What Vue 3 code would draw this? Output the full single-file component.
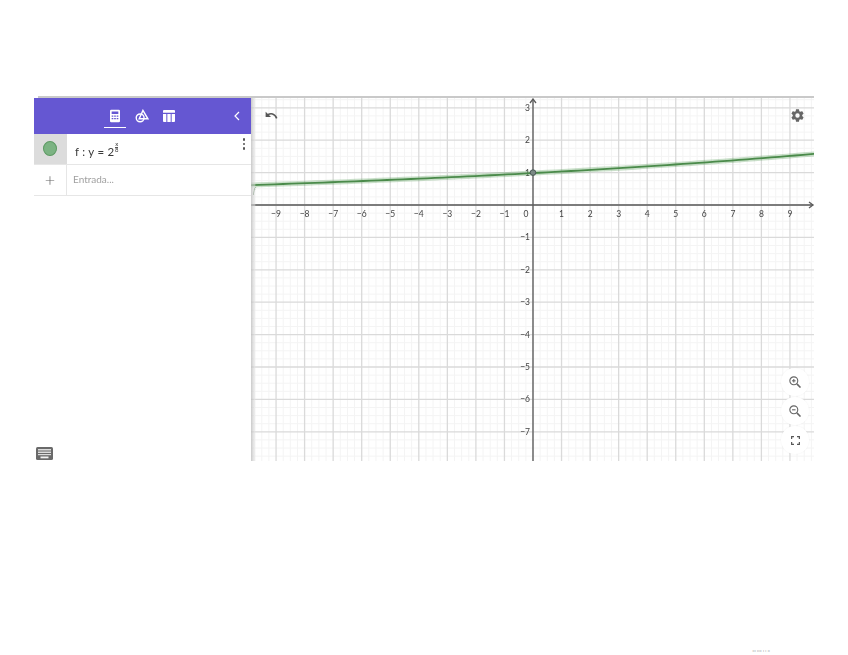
<script setup>
const W = 563, H = 364
const ox = 282, oy = 108, ux = 28.55, uy = 32.4
const X = v => ox + v * ux
const Y = v => oy - v * uy
const minorX = [], minorY = [], majorX = [], majorY = []
for (let i = -40; i <= 40; i++) {
  if (i % 4) minorX.push(X(i / 4))
}
for (let i = -32; i <= 16; i++) {
  if (i % 4) minorY.push(Y(i / 4))
}
const xNums = []
for (let i = -9; i <= 9; i++) { if (i) { xNums.push(i); } }
for (let i = -10; i <= 10; i++) majorX.push(X(i))
for (let i = -8; i <= 4; i++) majorY.push(Y(i))
const yNums = [3, 2, 1, -1, -2, -3, -4, -5, -6, -7]
const label = n => (n < 0 ? '\u2212' + Math.abs(n) : String(n))
let d = ''
for (let px = 0; px <= W + 8; px += 8) {
  const v = (px - ox) / ux
  d += (px ? 'L' : 'M') + px + ' ' + Y(0.985 * Math.pow(2, v / 14.5)).toFixed(2)
}
const zooms = [
  { id: 'in', plus: true },
  { id: 'out', plus: false }
]
</script>

<template>
  <div class="page">
    <div class="app">
      <aside class="panel">
        <header class="tabs">
          <div class="tab-group">
            <button class="tab active" aria-label="Álgebra">
              <svg width="10" height="14" viewBox="0 0 12 15">
                <path fill="#fff" fill-rule="evenodd" d="M1.5 0h9A1.5 1.5 0 0 1 12 1.5v12a1.5 1.5 0 0 1-1.5 1.5h-9A1.5 1.5 0 0 1 0 13.500v-12A1.500 1.500 0 0 1 1.500 0zM2 2v3h8V2zM2 7v1.500h2V7zm3 0v1.500h2V7zm3 0v1.500h2V7zM2 10v1.500h2V10zm3 0v1.500h2V10zm3 0v1.500h2V10z"/>
              </svg>
            </button>
            <button class="tab" aria-label="Herramientas">
              <svg width="14" height="14" viewBox="0 0 15 15" fill="none" stroke="#fff" stroke-width="1.500">
                <circle cx="5.500" cy="9.500" r="4.200"/>
                <path d="M8.500 1.500 13.800 10.500H4.500z"/>
              </svg>
            </button>
            <button class="tab" aria-label="Tabla">
              <svg width="12" height="12" viewBox="0 0 13 13">
                <path fill="#fff" d="M0 1a1 1 0 0 1 1-1h11a1 1 0 0 1 1 1v2H0zM0 4.200h3.600V13H1a1 1 0 0 1-1-1zM4.700 4.200h3.600V13H4.700zM9.400 4.200H13V12a1 1 0 0 1-1 1H9.400z"/>
              </svg>
            </button>
          </div>
          <button class="collapse" aria-label="Cerrar">
            <svg width="6" height="10" viewBox="0 0 6 10" fill="none" stroke="#fff" stroke-width="1.200"><path d="M5 1 1 5l4 4"/></svg>
          </button>
        </header>

        <div class="row row-fn">
          <div class="marble-cell"><span class="marble"></span></div>
          <div class="formula">
            <span>f : y = 2</span><span class="frac"><i>x</i><i>8</i></span>
          </div>
          <button class="more" aria-label="Más"><b></b><b></b><b></b></button>
        </div>
        <div class="row row-input">
          <div class="plus-cell">+</div>
          <div class="placeholder">Entrada...</div>
        </div>

        <div class="kbd">
          <svg width="17" height="13" viewBox="0 0 17 13">
            <rect width="17" height="13" rx="1.500" fill="#6a6a6a"/>
            <g fill="#dcdcdc">
              <rect x="2" y="2" width="13" height="1.500"/>
              <rect x="2" y="4.500" width="13" height="1.500"/>
              <rect x="2" y="7" width="13" height="1.200"/>
              <rect x="4.500" y="9.500" width="8" height="1.800" fill="#f2f2f2"/>
            </g>
          </svg>
        </div>
      </aside>

      <section class="graph">
        <svg class="plot" :width="W" :height="H" :viewBox="`0 0 ${W} ${H}`">
          <g stroke="#f4f4f4" stroke-width="1">
            <line v-for="x in minorX" :key="'mx' + x" :x1="x" :x2="x" y1="0" :y2="H" />
            <line v-for="y in minorY" :key="'my' + y" x1="0" :x2="W" :y1="y" :y2="y" />
          </g>
          <g stroke="#dadada" stroke-width="1.300">
            <line v-for="x in majorX" :key="'Mx' + x" :x1="x" :x2="x" y1="0" :y2="H" />
            <line v-for="y in majorY" :key="'My' + y" x1="0" :x2="W" :y1="y" :y2="y" />
          </g>
          <g stroke="#5a5a5a" stroke-width="1.300" fill="none">
            <line x1="0" :x2="W - 1" :y1="oy" :y2="oy" />
            <line :x1="ox" :x2="ox" y1="2" :y2="H" />
            <path :d="`M${ox - 3} 6 ${ox} 2 ${ox + 3} 6`" />
            <path :d="`M${W - 5} ${oy - 3} ${W - 1} ${oy} ${W - 5} ${oy + 3}`" />
          </g>
          <g class="num" text-anchor="middle">
            <text v-for="n in xNums" :key="'xn' + n" :x="X(n)" :y="oy + 12">{{ label(n) }}</text>
            <text :x="ox - 7" :y="oy + 12">0</text>
          </g>
          <g class="num" text-anchor="end">
            <text v-for="n in yNums" :key="'yn' + n" :x="ox - 3" :y="Y(n) + 3">{{ label(n) }}</text>
          </g>
          <path :d="d" fill="none" stroke="#3f8f3f" stroke-opacity=".28" stroke-width="5" />
          <path :d="d" fill="none" stroke="#4a8a4a" stroke-width="1.800" />
          <text class="fn-label" x="2" y="96">f</text>
          <circle :cx="ox" :cy="Y(1)" r="2.800" fill="#7b8a86" stroke="#4d5a58" stroke-width="1" />
        </svg>

        <button class="undo" aria-label="Deshacer">
          <svg width="13" height="9" viewBox="0 0 14 10" fill="none">
            <path d="M3 4.200C6 2.200 10.500 2.500 12.800 8.200" stroke="#555" stroke-width="1.800"/>
            <path d="M0.500 0.800v6h6z" fill="#555"/>
          </svg>
        </button>
        <button class="gear" aria-label="Ajustes">
          <svg width="15" height="15" viewBox="0 0 24 24">
            <path fill="#666" d="M19.430 12.980c.04-.32.070-.64.070-.98s-.030-.660-.070-.980l2.110-1.650c.190-.150.240-.420.120-.640l-2-3.460c-.120-.220-.390-.300-.610-.220l-2.490 1c-.520-.400-1.080-.730-1.690-.980l-.380-2.650A.488.488 0 0 0 14 2h-4c-.250 0-.460.180-.490.420l-.380 2.650c-.610.250-1.170.590-1.690.980l-2.490-1c-.230-.090-.490 0-.610.220l-2 3.460c-.130.220-.070.490.120.640l2.110 1.650c-.040.320-.070.650-.070.980s.030.660.070.980l-2.110 1.650c-.190.150-.240.420-.120.640l2 3.460c.120.220.390.300.610.220l2.490-1c.520.400 1.080.730 1.690.980l.380 2.650c.030.240.240.420.490.420h4c.250 0 .460-.180.490-.420l.380-2.650c.610-.250 1.170-.590 1.690-.980l2.490 1c.230.090.490 0 .610-.220l2-3.460c.120-.220.070-.490-.120-.640zM12 15.500a3.500 3.500 0 1 1 0-7 3.500 3.500 0 0 1 0 7z"/>
          </svg>
        </button>

        <div class="zoom-stack">
          <button v-for="z in zooms" :key="z.id" class="zoom-btn" :aria-label="z.id">
            <svg width="12" height="12" viewBox="0 0 13 13" fill="none" stroke="#666" stroke-width="1.200">
              <circle cx="5.200" cy="5.200" r="4.300"/>
              <path d="M8.500 8.500 12.500 12.500" stroke-width="1.700"/>
              <path d="M3.300 5.200h3.800"/>
              <path v-if="z.plus" d="M5.200 3.300v3.800"/>
            </svg>
          </button>
          <button class="zoom-btn" aria-label="Pantalla completa">
            <svg width="9" height="9" viewBox="0 0 10 10" fill="none" stroke="#555" stroke-width="1.300">
              <path d="M.7 3.300V.7h2.600M6.700.7h2.600v2.600M9.300 6.700v2.600H6.700M3.300 9.300H.7V6.700"/>
            </svg>
          </button>
        </div>
      </section>
    </div>
    <div class="speck">ııı ıııı ı ı ıı</div>
  </div>
</template>

<style>
html, body { margin: 0; background: #fff; }
</style>

<style scoped>
.page {
  width: 848px;
  height: 655px;
  box-sizing: border-box;
  padding: 96px 34px 0;
  overflow: hidden;
  background: #fff;
  display: flex;
  flex-direction: column;
  font-family: Lato, "Liberation Sans", sans-serif;
}
.app {
  display: flex;
  width: 780px;
  height: 365px;
  filter: blur(0.55px);
  position: relative;
}
.app::before {
  content: "";
  position: absolute;
  left: 4px;
  right: 0;
  top: 0;
  height: 2px;
  background: #c9c9c9;
  z-index: 2;
}
button {
  border: 0;
  padding: 0;
  background: none;
  display: flex;
  align-items: center;
  justify-content: center;
}
.panel {
  width: 217px;
  flex: none;
  position: relative;
  display: flex;
  flex-direction: column;
  background: #fff;
  padding-top: 2px;
  box-sizing: border-box;
}
.tabs {
  height: 36px;
  background: #6557d2;
  display: flex;
  align-items: center;
  box-sizing: border-box;
}
.tab-group {
  display: flex;
  gap: 5px;
  margin-left: 70px;
  height: 100%;
}
.tab {
  width: 22px;
  height: 100%;
  position: relative;
}
.tab.active::after {
  content: "";
  position: absolute;
  left: 0;
  right: 0;
  bottom: 6px;
  height: 1.500px;
  background: #fff;
}
.collapse {
  margin-left: auto;
  margin-right: 11px;
}
.row {
  display: flex;
  position: relative;
  border-bottom: 1px solid #e6e6e6;
  box-sizing: border-box;
}
.row-fn { height: 31px; }
.row-input { height: 31px; }
.marble-cell {
  width: 33px;
  background: #dcdcdc;
  display: flex;
  align-items: center;
  justify-content: center;
  padding: 0 1px 2px 0;
  box-sizing: border-box;
}
.marble {
  width: 14px;
  height: 15px;
  border-radius: 50%;
  background: #7cb383;
  border: 1px solid #5d9a63;
  box-sizing: border-box;
}
.formula {
  flex: 1;
  padding: 5px 0 0 8px;
  font-size: 11.500px;
  color: #3a3a3a;
  display: flex;
  align-items: center;
  letter-spacing: 0.25px;
  white-space: pre;
}
.frac {
  display: inline-flex;
  flex-direction: column;
  align-items: center;
  font-size: 6px;
  line-height: 4.500px;
  margin: -9px 0 0 0.5px;
  letter-spacing: 0;
}
.frac i { font-style: normal; }
.frac i:first-child { border-bottom: 0.5px solid #555; }
.more {
  position: absolute;
  right: 6px;
  top: 4px;
  flex-direction: column;
  gap: 2px;
}
.more b {
  width: 2.500px;
  height: 2.500px;
  border-radius: 50%;
  background: #555;
}
.plus-cell {
  width: 33px;
  border-right: 1px solid #e6e6e6;
  box-sizing: border-box;
  text-align: center;
  font: 300 18px/29px Lato, sans-serif;
  color: #666;
}
.placeholder {
  padding-left: 6px;
  font-size: 10px;
  line-height: 28px;
  color: #a0a0a0;
}
.kbd {
  position: absolute;
  left: 2px;
  bottom: 1px;
  height: 13px;
  transform: translateY(-3px);
}
.graph {
  flex: 1;
  position: relative;
  overflow: hidden;
  background: #fff;
}
.graph::after {
  content: "";
  position: absolute;
  inset: 0 auto 0 0;
  width: 5px;
  background: linear-gradient(90deg, rgba(190,190,190,.8), rgba(225,225,225,.5) 70%, transparent);
}
.plot { display: block; margin-top: 1px; }
.num {
  font: 8.500px Lato, "Liberation Sans", sans-serif;
  fill: #444;
}
.fn-label {
  font: italic 8px "Liberation Serif", serif;
  fill: #4d7a4d;
}
.undo {
  position: absolute;
  left: 14px;
  top: 15px;
}
.gear {
  position: absolute;
  right: 9px;
  top: 12px;
}
.zoom-stack {
  position: absolute;
  right: 5px;
  bottom: 7px;
  display: flex;
  flex-direction: column;
  gap: 1px;
}
.zoom-btn {
  width: 28px;
  height: 28px;
  border-radius: 50%;
  background: #fff;
  box-shadow: 0 0 2px rgba(0, 0, 0, .06);
}
.speck {
  margin: auto 44px 2px auto;
  font: 3.500px "Liberation Sans", sans-serif;
  color: #888;
  letter-spacing: 0.2px;
}
</style>
